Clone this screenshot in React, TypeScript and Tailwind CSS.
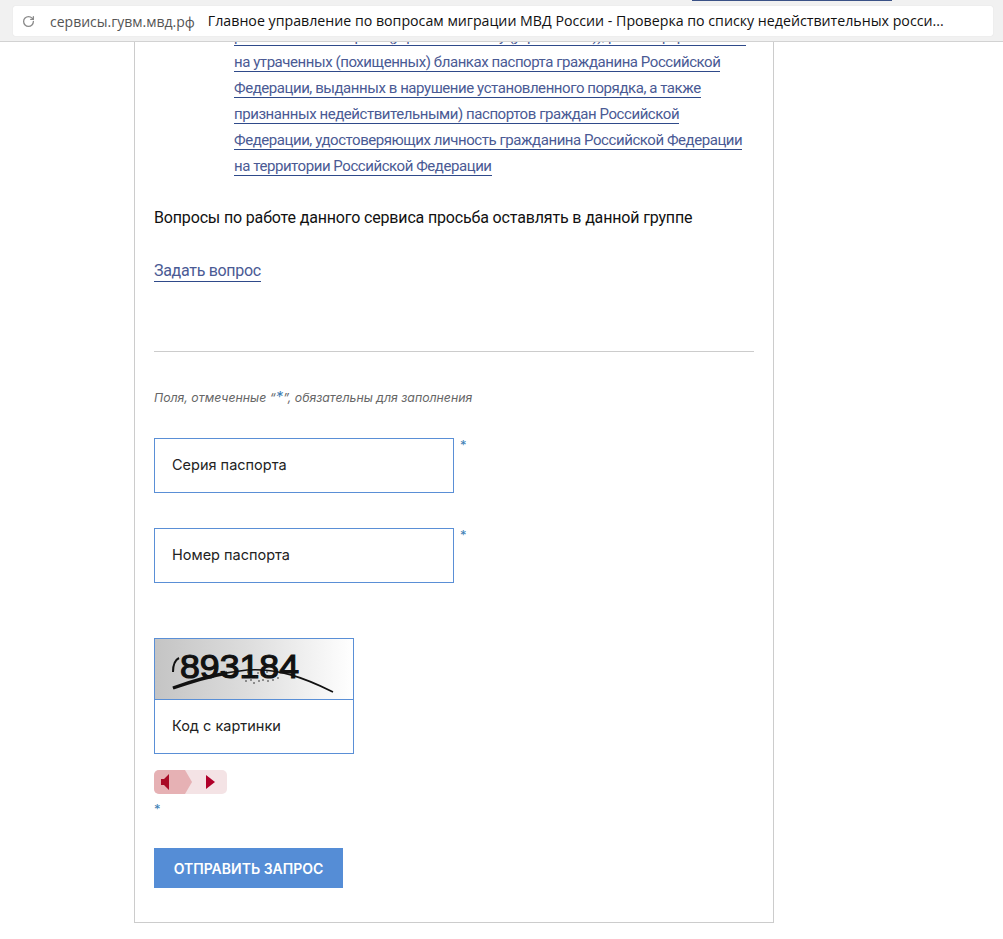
import React from "react";
import { RotateCw } from "lucide-react";

const specks = [
  [88, 38], [91, 42], [94, 36], [96, 41], [99, 44], [101, 38], [104, 42], [107, 36], [108, 41],
  [111, 38], [113, 42], [116, 37], [118, 41], [120, 34], [123, 39], [93, 33], [103, 34], [112, 33],
];

const Field = ({ label }: { label: string }) => {
  return (
    <div className="flex">
      <div className="w-[300px] h-[55px] border border-[#5a8fd6] flex items-center pl-[17px] pb-[2px] text-[14.5px] text-[#222] font-['Inter',sans-serif]">
        {label}
      </div>
      <span className="ml-[6px] text-[13px] leading-[12px] mt-[1px] text-[#3f7fb5] font-['Inter',sans-serif]">*</span>
    </div>
  );
};

const Captcha = () => {
  return (
    <svg width="198" height="60" viewBox="0 0 198 60" className="block">
      <defs>
        <linearGradient id="captchaBg" x1="0" y1="0" x2="1" y2="0">
          <stop offset="0" stopColor="#c4c4c4" />
          <stop offset="0.45" stopColor="#dcdcdc" />
          <stop offset="1" stopColor="#ffffff" />
        </linearGradient>
      </defs>
      <rect width="198" height="60" fill="url(#captchaBg)" />
      <text
        x="25"
        y="39"
        fontFamily="'Liberation Sans', sans-serif"
        fontSize="34"
        fill="#111"
        stroke="#111"
        strokeWidth="1.2"
        textLength="119"
        lengthAdjust="spacingAndGlyphs"
      >
        893184
      </text>
      <path d="M18 33C18 26 20 21 24 19" fill="none" stroke="#111" strokeWidth="2" />
      <path d="M18 49C40 41 62 34 92 31C122 29 148 38 178 53" fill="none" stroke="#111" strokeWidth="1.6" />
      <path d="M18 49C35 43 50 38 72 34" fill="none" stroke="#111" strokeWidth="3.4" />
      <g fill="#222">
        {specks.map(([x, y]) => (
          <circle key={`${x}-${y}`} cx={x} cy={y} r="0.8" />
        ))}
      </g>
    </svg>
  );
};

const AudioControl = () => {
  return (
    <div className="w-[73px] h-[24px] rounded-[5px] bg-[#f4e3e5] overflow-hidden">
      <svg width="73" height="24" viewBox="0 0 73 24" className="block">
        <path d="M0 0H31L38 12L31 24H0Z" fill="#e6b1b4" />
        <path d="M7 9H10L15 4V20L10 15H7Z" fill="#a90a25" />
        <path d="M52 5L61 12L52 19Z" fill="#b0002a" />
      </svg>
    </div>
  );
};

export default function App() {
  return (
    <div className="w-[1003px] h-[939px] overflow-hidden bg-white">
      <header className="relative h-[42px] bg-[#f1f1f1] border-b border-[#d2d2d2] pt-[6px] pl-[13px] pr-[10px]">
        <div className="absolute top-0 left-[692px] w-[200px] h-[1px] bg-[#3b5287]" />
        <div className="h-[30px] bg-white rounded-[2px] shadow-[0_0_1px_rgba(0,0,0,0.15)] flex items-center text-[14px] whitespace-nowrap font-['Open_Sans',sans-serif]">
          <RotateCw size={13} strokeWidth={2.4} className="ml-[9px] text-[#8a8a8a]" />
          <span className="ml-[15px] text-[#555]">сервисы.гувм.мвд.рф</span>
          <span className="ml-[13px] text-[14.2px] text-[#111]">
            Главное управление по вопросам миграции МВД России - Проверка по списку недействительных росси...
          </span>
        </div>
      </header>

      <main className="overflow-hidden ml-[134px] w-[640px] h-[881px] border-x border-b border-[#cccccc] px-[19px] font-['Roboto',sans-serif] tracking-[-0.16px]">
        <div className="pl-[80px] text-[15px] tracking-[-0.44px] leading-[26px] -mt-[19px] text-[#4a5a94] whitespace-nowrap">
          <a className="border-b border-[#2f4a8a]">
            российских паспортов (утративших силу (утраченных)), ранее оформленных
            <br />
            на утраченных (похищенных) бланках паспорта гражданина Российской
            <br />
            Федерации, выданных в нарушение установленного порядка, а также
            <br />
            признанных недействительными) паспортов граждан Российской
            <br />
            Федерации, удостоверяющих личность гражданина Российской Федерации
            <br />
            на территории Российской Федерации
          </a>
        </div>

        <p className="mt-[26px] text-[16px] leading-[26px] text-[#111]">
          Вопросы по работе данного сервиса просьба оставлять в данной группе
        </p>

        <div className="mt-[27px] text-[16px] tracking-[-0.3px] leading-[26px] text-[#4a5a94]">
          <a className="border-b border-[#2f4a8a] pb-[1px]">Задать вопрос</a>
        </div>

        <hr className="mt-[67px] border-[#cccccc]" />

        <p className="mt-[37px] text-[12.3px] leading-[18px] italic tracking-normal text-[#666] font-['Inter',sans-serif]">
          Поля, отмеченные “<span className="text-[15px] leading-none text-[#3f7fb5]">*</span>”, обязательны для заполнения
        </p>

        <div className="mt-[31px] tracking-normal">
          <Field label="Серия паспорта" />
        </div>
        <div className="mt-[35px] tracking-normal">
          <Field label="Номер паспорта" />
        </div>

        <div className="mt-[55px] w-[200px] border border-[#5a8fd6] tracking-normal">
          <Captcha />
          <div className="h-[54px] border-t border-[#5a8fd6] flex items-center pl-[17px] pb-[2px] text-[14.5px] text-[#222] font-['Inter',sans-serif]">
            Код с картинки
          </div>
        </div>

        <div className="mt-[16px]">
          <AudioControl />
        </div>
        <div className="mt-[9px] text-[13px] leading-[12px] text-[#3f7fb5] font-['Inter',sans-serif]">*</div>

        <button className="mt-[33px] block w-[189px] h-[40px] bg-[#558dd6] text-white text-[14px] tracking-normal font-semibold font-['Inter',sans-serif]">
          ОТПРАВИТЬ ЗАПРОС
        </button>
      </main>
    </div>
  );
}
